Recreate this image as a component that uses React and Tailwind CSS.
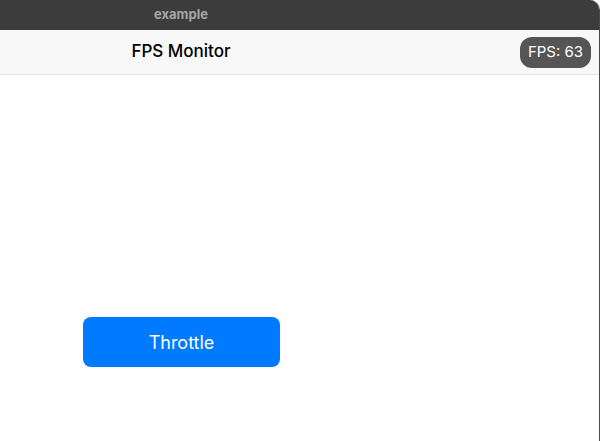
import React from 'react';

const App = () => {
  return (
    <div className="w-[600px] h-[441px] bg-white overflow-hidden" style={{ fontFamily: 'Inter, "Liberation Sans", sans-serif' }}>
      <div className="w-full h-full flex flex-col bg-white border-r border-[#4a4a4a] rounded-tr-[10px] overflow-hidden">
        <div className="h-[30px] bg-[#3c3c3c] flex items-center shrink-0">
          <div className="w-[362px] text-center text-[13px] font-bold text-[#a6a6a6]">example</div>
        </div>
        <div className="h-[45px] bg-[#f8f8f8] border-b border-[#e3e3e3] flex items-center shrink-0 pr-[8px]">
          <div className="w-[362px] text-center text-[17px] font-medium text-black">FPS Monitor</div>
          <div className="ml-auto h-[31px] w-[71px] justify-center flex items-center rounded-[12px] bg-[#555555] text-white text-[15px]">
            FPS: 63
          </div>
        </div>
        <div className="flex-1 pt-[242px] pl-[83px]">
          <button className="w-[197px] h-[50px] rounded-[8px] bg-[#007aff] text-white text-[18px]">
            Throttle
          </button>
        </div>
      </div>
    </div>
  );
};

export default App;
